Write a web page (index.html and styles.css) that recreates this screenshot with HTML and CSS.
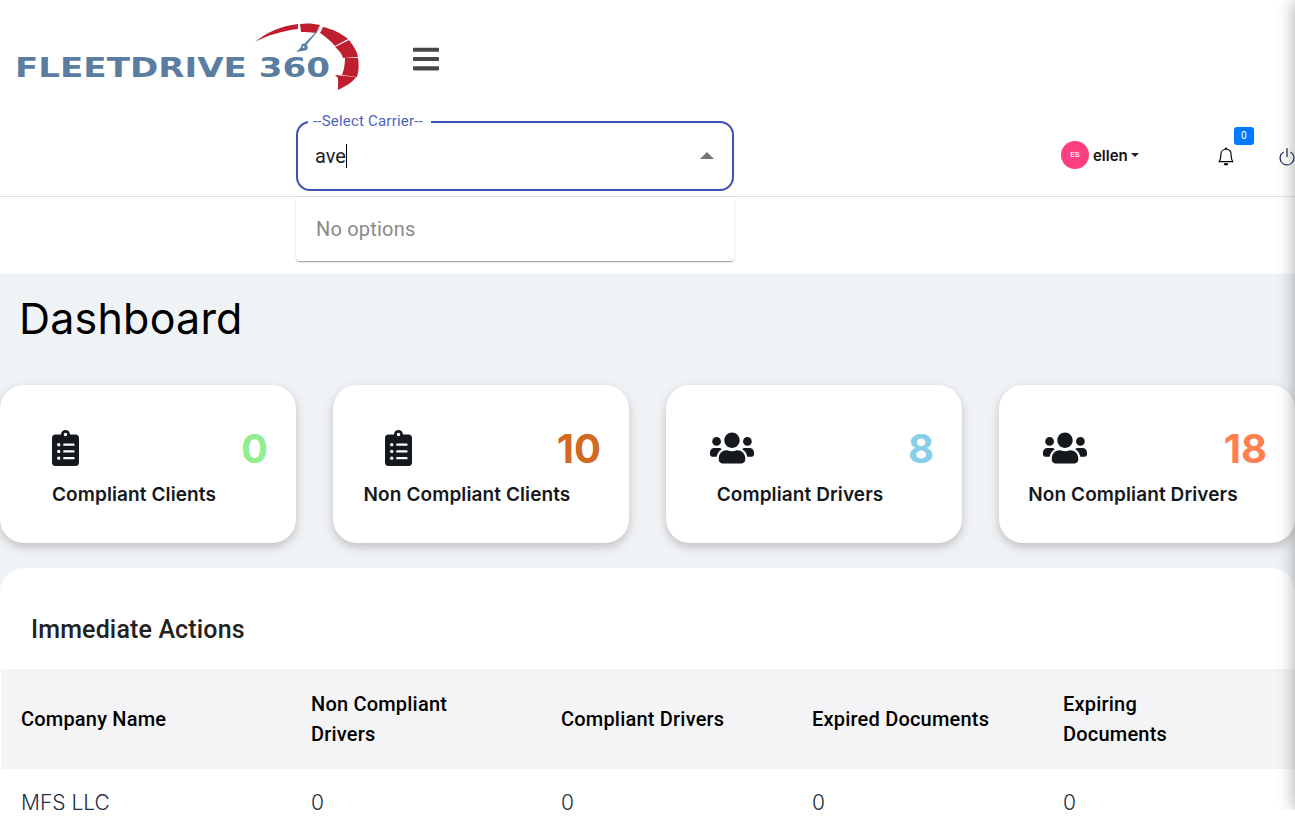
FILE: index.html
```html
<!DOCTYPE html>
<html lang="en">
<head>
  <meta charset="UTF-8">
  <meta name="viewport" content="width=device-width, initial-scale=1.0">
  <title>Fleetdrive 360 Dashboard</title>
  <link rel="stylesheet" href="styles.css">
</head>
<body>
  <div class="app">
    <header class="header">
      <div class="brand-row">
        <svg class="logo" viewBox="-2 0 347 72" width="347" height="72">
          <path fill="#bf1e2e" d="M238 22C250 12 264 6 281 4L281 9C265 11 251 15 238 22Z"/>
          <path fill="#bf1e2e" d="M283 4C290 3 297 3.500 303 5L299 13C294 12 289 12 284 12Z"/>
          <path fill="#bf1e2e" d="M306 7C315 9 324 13 331 19L318 26C314 21 309 17 303 13Z"/>
          <path fill="#bf1e2e" d="M332 20C336 25 340 31 341 37L326 38C325 34 322 30 318 27Z"/>
          <path fill="#bf1e2e" d="M341 38C342 44 342 50 340 57L325 55C327 50 328 44 328 38Z"/>
          <path fill="#bf1e2e" d="M339 57C336 62 329 66 321 70L321 58L318 55Z"/>
          <path fill="#5b7fa3" d="M305 6L289.500 25A3 3 0 0 1 287.500 30.500L279 32C281 30.500 282.500 29 284 27A3 3 0 0 1 287.500 23.500Z"/>
          <circle fill="#fff" cx="286.500" cy="27" r="1"/>
          <text class="logo-text" x="-2" y="57" textLength="315" lengthAdjust="spacingAndGlyphs">FLEETDRIVE 360</text>
        </svg>
        <button type="button" class="menu-btn">
          <svg viewBox="0 0 448 512" width="26" height="30"><path fill="#484848" d="M16 132h416c8.837 0 16-7.163 16-16V76c0-8.837-7.163-16-16-16H16C7.163 60 0 67.163 0 76v40c0 8.837 7.163 16 16 16zm0 160h416c8.837 0 16-7.163 16-16v-40c0-8.837-7.163-16-16-16H16c-8.837 0-16 7.163-16 16v40c0 8.837 7.163 16 16 16zm0 160h416c8.837 0 16-7.163 16-16v-40c0-8.837-7.163-16-16-16H16c-8.837 0-16 7.163-16 16v40c0 8.837 7.163 16 16 16z"/></svg>
        </button>
      </div>
      <div class="tool-row">
        <div class="carrier">
          <span class="carrier-label">--Select Carrier--</span>
          <span class="carrier-value">ave</span>
          <span class="carrier-cursor"></span>
          <span class="carrier-arrow"></span>
          <div class="carrier-menu">No options</div>
        </div>
        <div class="user">
          <span class="avatar">ES</span>
          <span class="user-name">ellen</span>
          <span class="user-caret"></span>
        </div>
        <div class="bell">
          <svg viewBox="0 0 16 16" width="18" height="19"><path fill="#000" d="M8 16a2 2 0 0 0 2-2H6a2 2 0 0 0 2 2zM8 1.918l-.797.161A4.002 4.002 0 0 0 4 6c0 .628-.134 2.197-.459 3.742-.16.767-.376 1.566-.663 2.258h10.244c-.287-.692-.502-1.49-.663-2.258C12.134 8.197 12 6.628 12 6a4.002 4.002 0 0 0-3.203-3.920L8 1.917zM14.220 12c.223.447.481.801.78 1H1c.299-.199.557-.553.78-1C2.680 10.200 3 6.880 3 6c0-2.420 1.720-4.440 4.005-4.901a1 1 0 1 1 1.990 0A5.002 5.002 0 0 1 13 6c0 .880.320 4.200 1.220 6z"/></svg>
          <span class="bell-badge">0</span>
        </div>
        <svg class="power" viewBox="0 0 16 16" width="20" height="20"><path fill="#1f2a5a" d="M7.500 1v7h1V1h-1z"/><path fill="#1f2a5a" d="M3 8.812a4.999 4.999 0 0 1 2.578-4.375l-.485-.874A6 6 0 1 0 11 3.616l-.501.865A5 5 0 1 1 3 8.812z"/></svg>
      </div>
    </header>

    <div class="spacer"></div>

    <main class="content">
      <h1 class="page-title">Dashboard</h1>

      <section class="cards">
        <div class="card">
          <div class="card-top">
            <div class="card-icon"><svg viewBox="0 0 384 512" width="27" height="36"><use href="#icon-clipboard"/></svg></div>
            <span class="card-num num-green">0</span>
          </div>
          <div class="card-label">Compliant Clients</div>
        </div>
        <div class="card">
          <div class="card-top">
            <div class="card-icon"><svg viewBox="0 0 384 512" width="27" height="36"><use href="#icon-clipboard"/></svg></div>
            <span class="card-num num-brown">10</span>
          </div>
          <div class="card-label">Non Compliant Clients</div>
        </div>
        <div class="card">
          <div class="card-top">
            <div class="card-icon"><svg viewBox="0 0 640 512" width="44" height="36"><use href="#icon-users"/></svg></div>
            <span class="card-num num-blue">8</span>
          </div>
          <div class="card-label">Compliant Drivers</div>
        </div>
        <div class="card">
          <div class="card-top">
            <div class="card-icon"><svg viewBox="0 0 640 512" width="44" height="36"><use href="#icon-users"/></svg></div>
            <span class="card-num num-coral">18</span>
          </div>
          <div class="card-label">Non Compliant Drivers</div>
        </div>
      </section>

      <section class="panel">
        <h2 class="panel-title">Immediate Actions</h2>
        <table class="actions">
          <thead>
            <tr>
              <th class="col-name">Company Name</th>
              <th class="col-a">Non Compliant Drivers</th>
              <th class="col-b">Compliant Drivers</th>
              <th class="col-b">Expired Documents</th>
              <th class="col-last">Expiring Documents</th>
            </tr>
          </thead>
          <tbody>
            <tr>
              <td>MFS LLC</td>
              <td>0</td>
              <td>0</td>
              <td>0</td>
              <td>0</td>
            </tr>
          </tbody>
        </table>
      </section>
    </main>

    <div class="edge-shadow"></div>
  </div>

  <svg class="defs" width="0" height="0">
    <symbol id="icon-clipboard" viewBox="0 0 384 512"><path fill="#15181d" d="M336 64h-80c0-35.300-28.700-64-64-64s-64 28.700-64 64H48C21.500 64 0 85.500 0 112v352c0 26.500 21.500 48 48 48h288c26.500 0 48-21.500 48-48V112c0-26.500-21.500-48-48-48zM96 424c-13.300 0-24-10.700-24-24s10.700-24 24-24 24 10.700 24 24-10.700 24-24 24zm0-96c-13.300 0-24-10.700-24-24s10.700-24 24-24 24 10.700 24 24-10.700 24-24 24zm0-96c-13.300 0-24-10.700-24-24s10.700-24 24-24 24 10.700 24 24-10.700 24-24 24zm96-192c13.300 0 24 10.700 24 24s-10.700 24-24 24-24-10.700-24-24 10.700-24 24-24zm128 368c0 4.400-3.600 8-8 8H168c-4.400 0-8-3.600-8-8v-16c0-4.400 3.600-8 8-8h144c4.400 0 8 3.600 8 8v16zm0-96c0 4.400-3.600 8-8 8H168c-4.400 0-8-3.600-8-8v-16c0-4.400 3.600-8 8-8h144c4.400 0 8 3.600 8 8v16zm0-96c0 4.400-3.600 8-8 8H168c-4.400 0-8-3.600-8-8v-16c0-4.400 3.600-8 8-8h144c4.400 0 8 3.600 8 8v16z"/></symbol>
    <symbol id="icon-users" viewBox="0 0 640 512"><path fill="#15181d" d="M96 224c35.300 0 64-28.700 64-64s-28.700-64-64-64-64 28.700-64 64 28.700 64 64 64zm448 0c35.300 0 64-28.700 64-64s-28.700-64-64-64-64 28.700-64 64 28.700 64 64 64zm32 32h-64c-17.600 0-33.500 7.100-45.100 18.600 40.300 22.100 68.900 62 75.100 109.400h66c17.700 0 32-14.300 32-32v-32c0-35.300-28.700-64-64-64zm-256 0c61.900 0 112-50.100 112-112S381.900 32 320 32 208 82.100 208 144s50.100 112 112 112zm76.800 32h-8.300c-20.800 10-43.900 16-68.500 16s-47.600-6-68.500-16h-8.300C179.600 288 128 339.600 128 403.200V432c0 26.500 21.500 48 48 48h288c26.500 0 48-21.500 48-48v-28.800c0-63.600-51.600-115.200-115.200-115.200zm-223.700-13.400C161.500 263.100 145.600 256 128 256H64c-35.300 0-64 28.700-64 64v32c0 17.700 14.300 32 32 32h65.900c6.300-47.400 34.900-87.300 75.200-109.400z"/></symbol>
  </svg>
</body>
</html>
```

FILE: styles.css
```css
* {
  box-sizing: border-box;
}

html, body {
  margin: 0;
  height: 100%;
  background: #fff;
  overflow: hidden;
}

body {
  font-family: Roboto, Arial, sans-serif;
  color: #15181d;
}

.app {
  position: relative;
  height: 810px;
  overflow: hidden;
}

.defs {
  position: absolute;
}

/* header */
.brand-row {
  display: flex;
  align-items: flex-start;
  height: 112px;
  padding: 20px 0 0 15px;
}

.logo-text {
  font-family: "DejaVu Sans", sans-serif;
  font-weight: 700;
  font-size: 27px;
  fill: #5a7da1;
}

.menu-btn {
  margin: 24px 0 0 51px;
  padding: 0;
  border: none;
  background: none;
  line-height: 0;
}

.tool-row {
  display: flex;
  align-items: flex-start;
  height: 85px;
  padding: 9px 0 0 296px;
  border-bottom: 1px solid #dee2e6;
}

.carrier {
  position: relative;
  display: flex;
  align-items: center;
  flex: none;
  width: 438px;
  height: 70px;
  padding-left: 17px;
  border: 2px solid #3f51b5;
  border-radius: 14px;
  font-size: 20px;
}

.carrier-label {
  position: absolute;
  left: 10px;
  top: -10px;
  padding: 0 8px 0 5px;
  background: #fff;
  color: #4f62c0;
  font-size: 15px;
  letter-spacing: .2px;
  line-height: 16px;
}

.carrier-value {
  color: #222;
}

.carrier-cursor {
  width: 1px;
  height: 24px;
  background: #000;
}

.carrier-arrow {
  position: absolute;
  right: 18px;
  top: 29px;
  border-left: 7px solid transparent;
  border-right: 7px solid transparent;
  border-bottom: 7px solid #757575;
}

.carrier-menu {
  position: absolute;
  left: -2px;
  right: -2px;
  top: 74px;
  height: 64px;
  padding-left: 20px;
  background: #fff;
  border-radius: 4px;
  box-shadow: 0 2px 1px -1px rgba(0, 0, 0, .2), 0 1px 1px 0 rgba(0, 0, 0, .14), 0 1px 3px 0 rgba(0, 0, 0, .12);
  color: #8a8a8a;
  letter-spacing: .2px;
  line-height: 64px;
  z-index: 5;
}

.user {
  display: flex;
  align-items: center;
  flex: none;
  margin: 20px 0 0 327px;
}

.avatar {
  width: 28px;
  height: 28px;
  border-radius: 50%;
  background: #ff3e7f;
  color: #fff;
  font-size: 8px;
  font-weight: 500;
  line-height: 28px;
  text-align: center;
}

.user-name {
  margin-left: 4px;
  font-family: Inter, sans-serif;
  font-weight: 600;
  font-size: 15px;
  color: #111;
}

.user-caret {
  margin-left: 3px;
  border-left: 4px solid transparent;
  border-right: 4px solid transparent;
  border-top: 4px solid #222;
}

.bell {
  position: relative;
  flex: none;
  margin: 26px 0 0 78px;
  line-height: 0;
}

.bell-badge {
  position: absolute;
  left: 17px;
  top: -20px;
  width: 20px;
  height: 18px;
  border-radius: 3px;
  background: #007bff;
  color: #fff;
  font-size: 10px;
  line-height: 18px;
  text-align: center;
}

.power {
  flex: none;
  margin: 26px 0 0 42px;
}

.spacer {
  height: 77px;
}

/* dashboard */
.content {
  background: #f0f3f6;
}

.page-title {
  height: 111px;
  margin: 0;
  padding: 20px 0 0 19px;
  font-family: Inter, sans-serif;
  font-weight: 400;
  font-size: 43px;
  letter-spacing: .2px;
  line-height: 48px;
  color: #000;
}

.cards {
  display: grid;
  grid-template-columns: repeat(4, 296px);
  column-gap: 37px;
}

.card {
  height: 158px;
  padding: 45px 28px 0 0;
  background: #fff;
  border-radius: 24px;
  box-shadow: 0 4px 10px rgba(60, 40, 40, .25);
}

.card-top {
  display: flex;
  align-items: center;
  justify-content: space-between;
  height: 36px;
}

.card-icon {
  width: 131px;
  text-align: center;
  line-height: 0;
}

.card-num {
  font-family: Inter, sans-serif;
  font-weight: 700;
  font-size: 40px;
}

.num-green {
  color: #90ee90;
}

.num-brown {
  color: #d2691e;
}

.num-blue {
  color: #87ceeb;
}

.num-coral {
  color: #ff7f50;
}

.card-label {
  margin-top: 17px;
  font-family: Inter, sans-serif;
  font-weight: 600;
  font-size: 19px;
  letter-spacing: .1px;
  line-height: 24px;
  text-align: center;
  white-space: nowrap;
}

.panel {
  margin-top: 25px;
  background: #fff;
  border-radius: 24px 24px 0 0;
  overflow: hidden;
}

.panel-title {
  height: 101px;
  margin: 0;
  padding-left: 31px;
  font-weight: 500;
  font-size: 25px;
  letter-spacing: .15px;
  line-height: 123px;
  color: #222;
}

.actions {
  width: 1294px;
  margin-left: 1px;
  border-collapse: collapse;
  table-layout: fixed;
}

.actions th {
  height: 100px;
  padding: 0 40px 0 20px;
  background: #f4f4f6;
  color: #000;
  font-weight: 500;
  font-size: 20px;
  letter-spacing: .2px;
  line-height: 30px;
  text-align: left;
}

.col-name {
  width: 290px;
}

.col-a {
  width: 250px;
}

.col-b {
  width: 251px;
}

.actions .col-last {
  padding-right: 100px;
}

.actions td {
  height: 66px;
  padding: 0 20px;
  font-family: Inter, sans-serif;
  font-weight: 300;
  font-size: 21px;
  color: #1f3044;
}

/* shadow of the drawer parked past the right edge */
.edge-shadow {
  position: absolute;
  left: 100%;
  top: 0;
  width: 20px;
  height: 100%;
  box-shadow: 0 0 18px rgba(0, 0, 0, .35);
}
```
